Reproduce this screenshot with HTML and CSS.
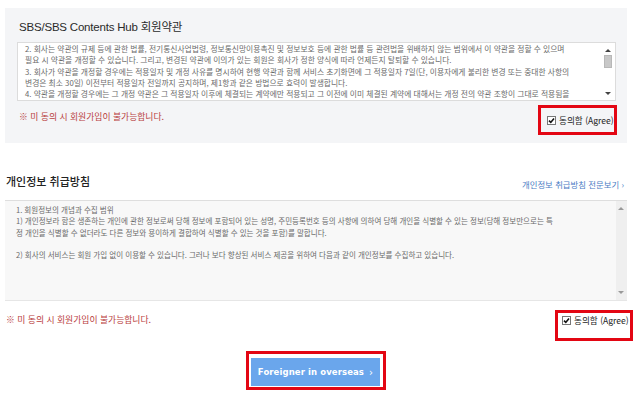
FILE: index.html
```html
<!DOCTYPE html>
<html lang="ko">
<head>
<meta charset="utf-8">
<title>회원약관</title>
<link rel="stylesheet" href="styles.css">
</head>
<body>
<section class="terms">
  <h2 class="terms-title">SBS/SBS Contents Hub 회원약관</h2>
  <div class="scrollbox scrollbox--terms">
    <div class="scroll-text">
      <p class="line">2. 회사는 약관의 규제 등에 관한 법률, 전기통신사업법령, 정보통신망이용촉진 및 정보보호 등에 관한 법률 등 관련법을 위배하지 않는 범위에서 이 약관을 정할 수 있으며</p>
      <p class="line">필요 시 약관을 개정할 수 있습니다. 그리고, 변경된 약관에 이의가 있는 회원은 회사가 정한 양식에 따라 언제든지 탈퇴할 수 있습니다.</p>
      <p class="line">3. 회사가 약관을 개정할 경우에는 적용일자 및 개정 사유를 명시하여 현행 약관과 함께 서비스 초기화면에 그 적용일자 7일(단, 이용자에게 불리한 변경 또는 중대한 사항의</p>
      <p class="line">변경은 최소 30일) 이전부터 적용일자 전일까지 공지하며, 제1항과 같은 방법으로 효력이 발생합니다.</p>
      <p class="line">4. 약관을 개정할 경우에는 그 개정 약관은 그 적용일자 이후에 체결되는 계약에만 적용되고 그 이전에 이미 체결된 계약에 대해서는 개정 전의 약관 조항이 그대로 적용됨을</p>
    </div>
    <div class="scrollbar">
      <span class="arrow arrow--up"></span>
      <span class="thumb"></span>
      <span class="track"></span>
      <span class="arrow arrow--down"></span>
    </div>
  </div>
  <div class="agree-row">
    <p class="warn">※ 미 동의 시 회원가입이 불가능합니다.</p>
    <label class="agree agree--first">
      <span class="check"><svg viewBox="0 0 9 9" width="9" height="9"><rect x="0.5" y="0.5" width="8" height="8" fill="#fff" stroke="#777"/><path d="M2 4.6 L3.8 6.4 L7 2.4" fill="none" stroke="#111" stroke-width="1.6"/></svg></span>
      <span class="agree-text">동의함 (Agree)</span>
    </label>
  </div>
</section>

<section class="privacy">
  <div class="privacy-head">
    <h2 class="privacy-title">개인정보 취급방침</h2>
    <a class="privacy-link" href="#">개인정보 취급방침 전문보기 ›</a>
  </div>
  <div class="scrollbox scrollbox--privacy">
    <div class="scroll-text">
      <p class="line">1. 회원정보의 개념과 수집 범위</p>
      <p class="line">1) 개인정보라 함은 생존하는 개인에 관한 정보로써 당해 정보에 포함되어 있는 성명, 주민등록번호 등의 사항에 의하여 당해 개인을 식별할 수 있는 정보(당해 정보만으로는 특</p>
      <p class="line">정 개인을 식별할 수 없더라도 다른 정보와 용이하게 결합하여 식별할 수 있는 것을 포함)를 말합니다.</p>
      <p class="line">&nbsp;</p>
      <p class="line">2) 회사의 서비스는 회원 가입 없이 이용할 수 있습니다. 그러나 보다 향상된 서비스 제공을 위하여 다음과 같이 개인정보를 수집하고 있습니다.</p>
    </div>
    <div class="scrollbar scrollbar--light">
      <span class="arrow arrow--up"></span>
      <span class="track"></span>
      <span class="arrow arrow--down"></span>
    </div>
  </div>
  <div class="agree-row">
    <p class="warn warn--second">※ 미 동의 시 회원가입이 불가능합니다.</p>
    <label class="agree agree--second">
      <span class="check"><svg viewBox="0 0 9 9" width="9" height="9"><rect x="0.5" y="0.5" width="8" height="8" fill="#fff" stroke="#777"/><path d="M2 4.6 L3.8 6.4 L7 2.4" fill="none" stroke="#111" stroke-width="1.6"/></svg></span>
      <span class="agree-text">동의함 (Agree)</span>
    </label>
  </div>
  <div class="btn-row">
    <div class="btn-frame">
      <a class="btn" href="#">Foreigner in overseas <span class="btn-arrow">›</span></a>
    </div>
  </div>
</section>
</body>
</html>
```

FILE: styles.css
```css
* { box-sizing: border-box; }
html, body { margin: 0; padding: 0; background: #fff; }
body {
  width: 640px;
  height: 394px;
  overflow: hidden;
  font-family: "Noto Sans CJK KR", "Liberation Sans", sans-serif;
  color: #333;
}
p, h2 { margin: 0; }

.terms {
  margin: 8px 13px 0 5px;
  background: #f4f5f7;
  padding: 12px 11px 8px 12px;
  height: 135px;
}
.terms-title {
  font-family: "Liberation Sans", "Noto Sans CJK KR", sans-serif;
  font-size: 11.5px;
  font-weight: normal;
  line-height: 14px;
  color: #2a2a2a;
  padding-left: 2px;
  letter-spacing: -0.2px;
}

.scrollbox {
  display: flex;
  overflow: hidden;
}
.scrollbox--terms {
  margin-top: 8px;
  height: 59px;
  background: #fff;
  border: 1px solid #dcdcdc;
}
.scroll-text {
  flex: 1;
  overflow: hidden;
  line-height: 11.3px;
  color: #6a6a6a;
}
.scrollbox--terms .scroll-text { padding: 0 0 0 7px; font-size: 7.78px; }
.line { white-space: nowrap; }

.scrollbar {
  width: 12px;
  display: flex;
  flex-direction: column;
  align-items: center;
  padding: 3px 2px 3px 0;
}
.scrollbar .track { flex: 1; }
.thumb {
  width: 8px;
  height: 13px;
  margin-top: 3px;
  background: #c8c8c8;
  border: 1px solid #b8b8b8;
}
.arrow {
  width: 0;
  height: 0;
  border-left: 3px solid transparent;
  border-right: 3px solid transparent;
  margin-top: 3px;
}
.arrow--up { border-bottom: 3px solid #444; }
.arrow--down { border-top: 3px solid #444; margin-bottom: 2px; }
.scrollbar--light { background: #efefef; width: 11px; }
.scrollbar--light .arrow--up { border-bottom-color: #999; margin-top: 3px; }
.scrollbar--light .arrow--down { border-top-color: #999; margin-bottom: 3px; }

.agree-row {
  display: flex;
  justify-content: space-between;
  align-items: flex-start;
}
.warn {
  font-size: 8.8px;
  line-height: 12px;
  color: #b94040;
  margin-top: 10px;
  padding-left: 2px;
}
.agree {
  display: flex;
  align-items: center;
  gap: 3px;
  border: 3px solid #e30613;
  font-size: 8.6px;
  line-height: 14px;
  color: #222;
  white-space: nowrap;
}
.agree--first {
  margin-top: 4px;
  margin-right: -1px;
  width: 79px;
  height: 30px;
  padding-left: 6px;
}
.check { display: flex; }
.agree-text { font-family: "Noto Sans CJK KR", "DejaVu Sans", sans-serif; }

.privacy {
  margin: 30px 13px 0 5px;
}
.privacy-head {
  display: flex;
  justify-content: space-between;
  align-items: center;
  height: 16px;
}
.privacy-title {
  font-size: 11px;
  font-weight: 500;
  line-height: 16px;
  color: #222;
  padding-left: 1px;
}
.privacy-link {
  font-size: 8.4px;
  line-height: 12px;
  color: #4a7cc4;
  text-decoration: none;
  margin-top: 6px;
  padding-right: 3px;
}
.scrollbox--privacy {
  margin-top: 11px;
  height: 101px;
  background: #f8f8f8;
  border-top: 1px solid #dedede;
  border-bottom: 1px solid #e6e6e6;
}
.scrollbox--privacy .scroll-text { padding: 3px 0 0 11px; font-size: 7.53px; }

.warn--second { margin-top: 13px; padding-left: 1px; }
.agree--second {
  margin-top: 9px;
  margin-right: -6px;
  width: 78px;
  height: 31px;
  align-items: flex-start;
  padding-left: 4px;
  padding-top: 0;
}
.agree--second .check { margin-top: 3px; }

.btn-row {
  display: flex;
  justify-content: center;
  margin-top: 10px;
}
.btn-frame {
  border: 3px solid #e30613;
  width: 140px;
  height: 39px;
  padding: 4px 3px 1px 2px;
  display: flex;
}
.btn {
  flex: 1;
  display: flex;
  align-items: center;
  justify-content: center;
  gap: 5px;
  background: #6aa6ec;
  color: #fff;
  font-family: "DejaVu Sans", sans-serif;
  font-size: 8.5px;
  font-weight: bold;
  text-decoration: none;
  letter-spacing: 0.1px;
}
.btn-arrow { font-weight: normal; font-size: 10px; }
```
